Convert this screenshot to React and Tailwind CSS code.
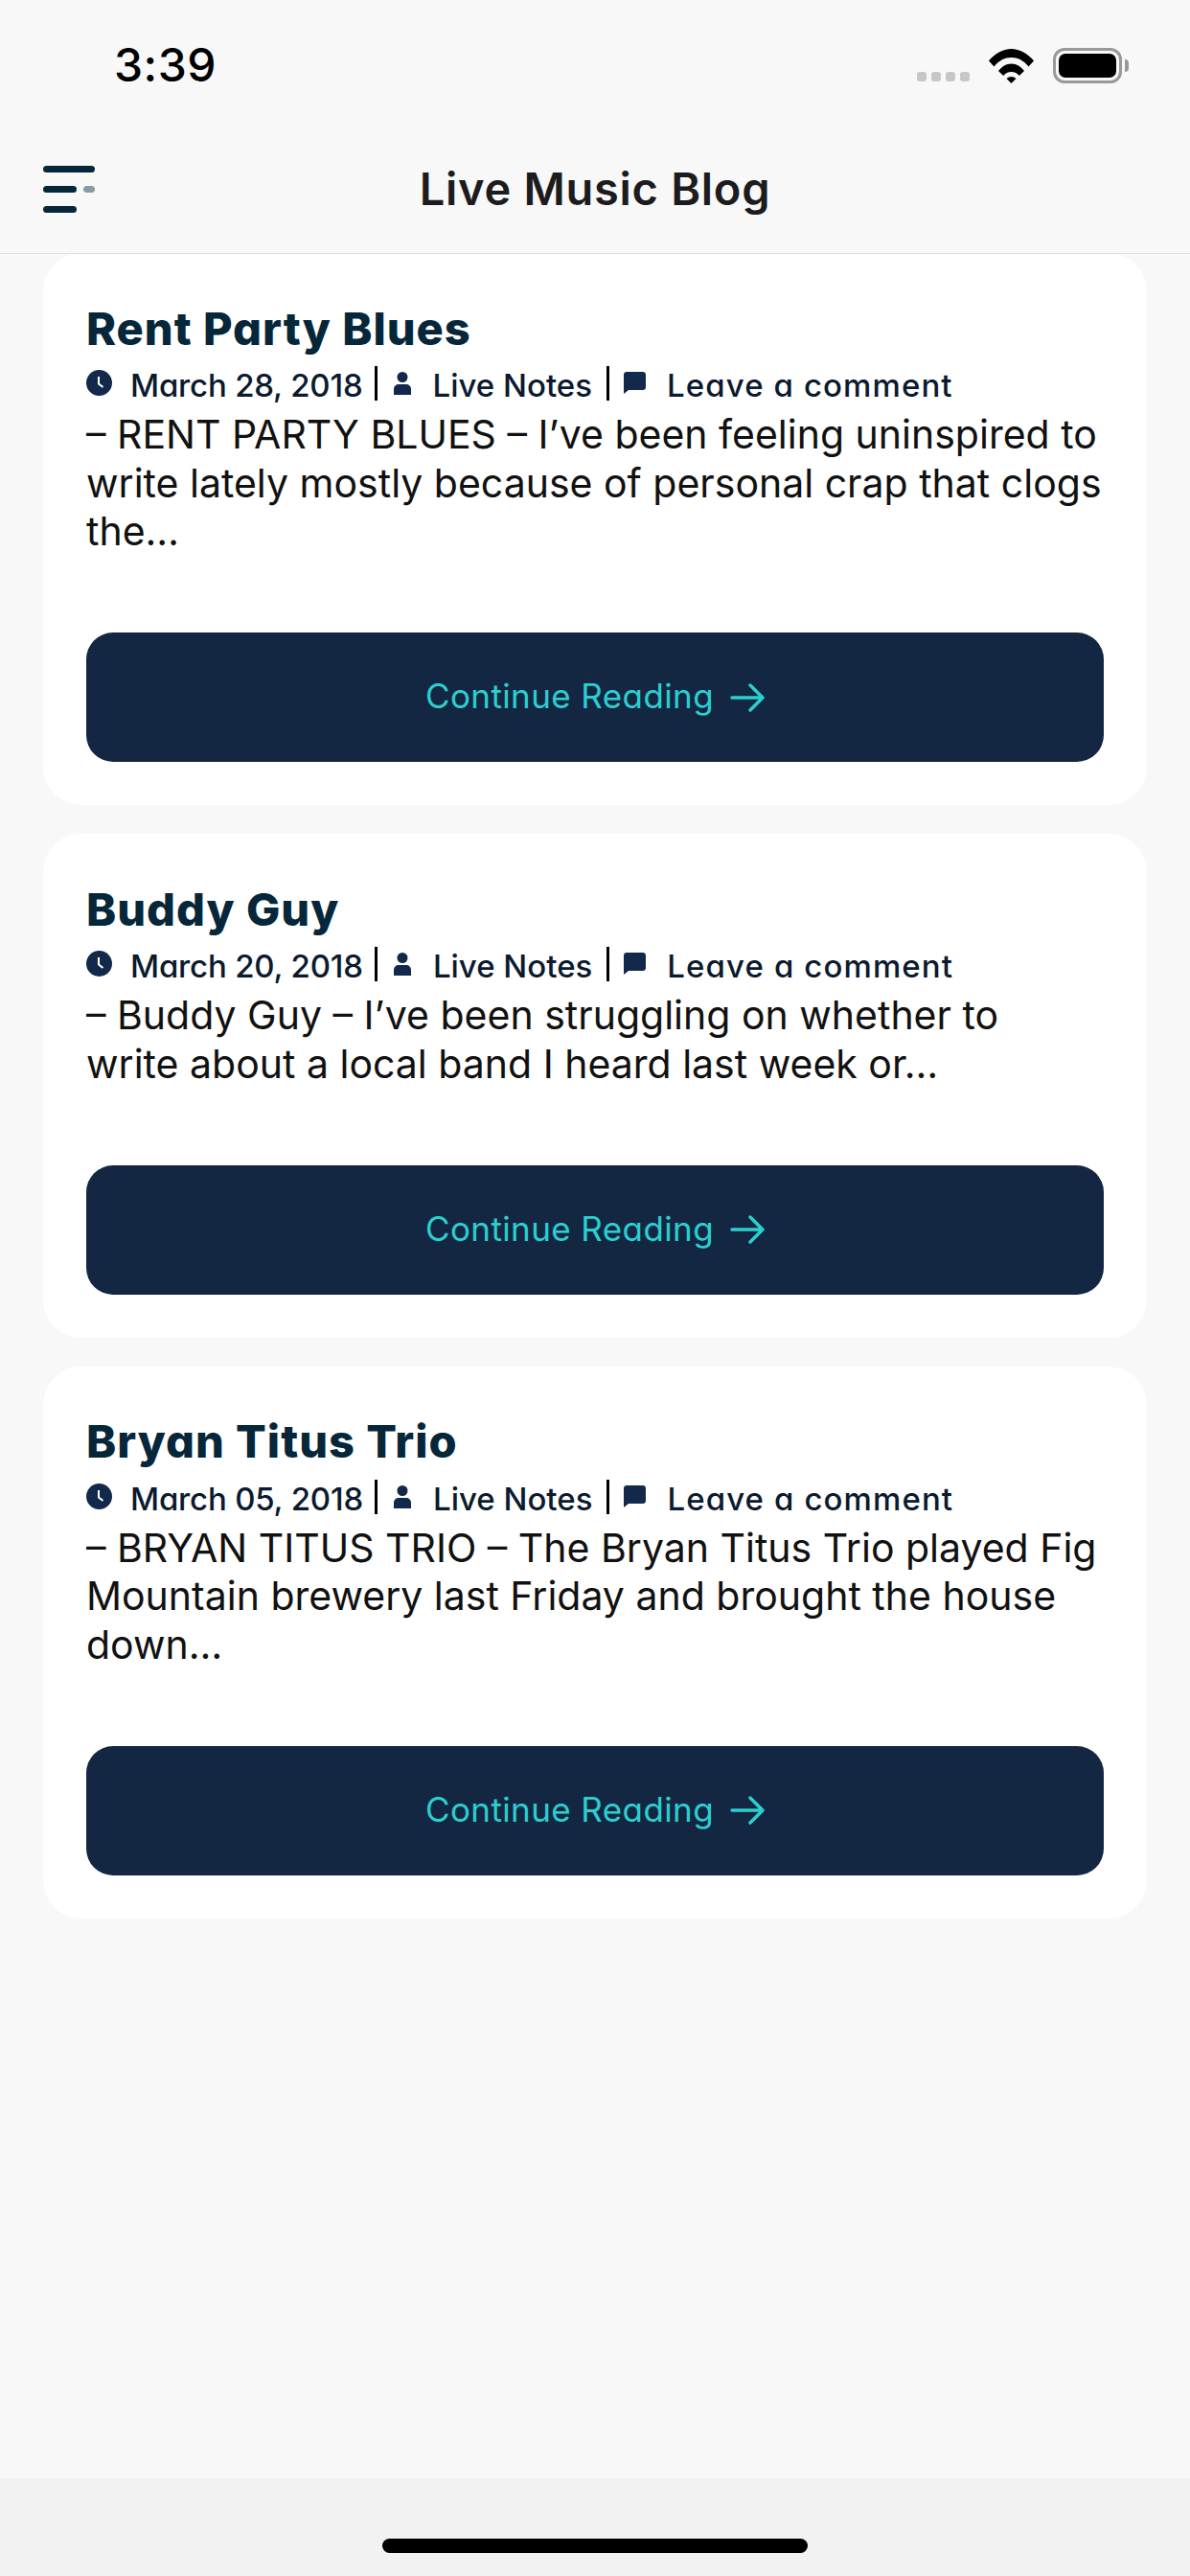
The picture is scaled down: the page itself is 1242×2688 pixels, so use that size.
import React from "react";

const posts = [
  {
    title: "Rent Party Blues",
    date: "March 28, 2018",
    excerpt: [
      "– RENT PARTY BLUES – I’ve been feeling uninspired to",
      "write lately mostly because of personal crap that clogs",
      "the…",
    ],
  },
  {
    title: "Buddy Guy",
    date: "March 20, 2018",
    excerpt: [
      "– Buddy Guy – I’ve been struggling on whether to",
      "write about a local band I heard last week or…",
    ],
  },
  {
    title: "Bryan Titus Trio",
    date: "March 05, 2018",
    excerpt: [
      "– BRYAN TITUS TRIO – The Bryan Titus Trio played Fig",
      "Mountain brewery last Friday and brought the house",
      "down…",
    ],
  },
];

const ClockIcon = () => (
  <svg viewBox="0 0 27 27" className="w-[27px] h-[27px] shrink-0 mb-[6px]">
    <circle cx="13.5" cy="13.5" r="13.5" fill="#13294b" />
    <path d="M13 7v7.500l4.500 3.500" fill="none" stroke="#fff" strokeWidth="2" />
  </svg>
);

const PersonIcon = () => (
  <svg viewBox="0 0 18 24" className="w-[18px] h-[24px] shrink-0 mb-[5px]">
    <circle cx="9" cy="5.5" r="5.5" fill="#13294b" />
    <path d="M0 24v-6c0-3 2.500-5 5-5h8c2.500 0 5 2 5 5v6z" fill="#13294b" />
  </svg>
);

const CommentIcon = () => (
  <svg viewBox="0 0 23 23" className="w-[23px] h-[23px] shrink-0 ml-[15px] mb-[6px]">
    <path d="M3 0h17c1.700 0 3 1.300 3 3v13c0 1.700-1.300 3-3 3H5l-5 4V3c0-1.700 1.300-3 3-3z" fill="#13294b" />
  </svg>
);

const Divider = () => <span className="w-[3px] h-[36px] bg-black shrink-0 mb-[5px]" />;

const ArrowIcon = () => (
  <svg viewBox="0 0 36 30" className="w-[36px] h-[30px]" fill="none" stroke="currentColor" strokeWidth="3.5" strokeLinecap="round" strokeLinejoin="round">
    <path d="M2 15h32M21 2l13 13-13 13" />
  </svg>
);

const WifiIcon = () => (
  <svg viewBox="0 0 47 36" className="w-[47px] h-[36px]" fill="#000">
    <path d="M0 12.500C6 5 15 0 23.500 0S41 5 47 12.500L41.500 18.500C36.500 12 30 9 23.500 9S10.500 12 5.500 18.500Z" />
    <path d="M10 23C13.500 18.500 18 15.500 23.500 15.500S33.500 18.500 37 23L31.800 28C29.500 25.500 27 24 23.500 24S17.500 25.500 15.200 28Z" />
    <path d="M18.500 31C20 29.700 21.700 29 23.500 29S27 29.700 28.500 31L23.500 36Z" />
  </svg>
);

const StatusBar = () => (
  <div className="h-[48px] pl-[119px] pr-[64px] flex items-center justify-between">
    <span className="text-[48px] leading-none font-medium text-black font-['Inter',sans-serif] tracking-[0.5px]">
      3:39
    </span>
    <div className="flex items-end">
      <div className="flex gap-[5px] mr-[20px] mb-[2px]">
        <span className="w-[10px] h-[10px] rounded-[3px] bg-[#c7c7c7]" />
        <span className="w-[10px] h-[10px] rounded-[3px] bg-[#c7c7c7]" />
        <span className="w-[10px] h-[10px] rounded-[3px] bg-[#c7c7c7]" />
        <span className="w-[10px] h-[10px] rounded-[3px] bg-[#c7c7c7]" />
      </div>
      <WifiIcon />
      <div className="ml-[20px] w-[72px] h-[37px] rounded-[12px] border-[3px] border-[#999999] p-[3px]">
        <div className="w-full h-full rounded-[7px] bg-black" />
      </div>
      <span className="ml-[3px] mb-[12px] w-[4px] h-[13px] rounded-r-full bg-[#999999]" />
    </div>
  </div>
);

const NavBar = () => (
  <div className="mt-[72px] h-[66px] grid grid-cols-[1fr_auto_1fr] items-center">
    <div className="ml-[45px] flex flex-col gap-[14px] w-[54px]">
      <span className="h-[7px] w-[54px] rounded-full bg-[#06263a]" />
      <div className="flex gap-[7px]">
        <span className="h-[7px] w-[35px] rounded-full bg-[#06263a]" />
        <span className="h-[7px] w-[12px] rounded-full bg-[#8a9aa5]" />
      </div>
      <span className="h-[7px] w-[35px] rounded-full bg-[#06263a]" />
    </div>
    <h1 className="mb-[2px] text-[47px] leading-none font-semibold text-[#1c1c1e] font-['Inter',sans-serif] [font-feature-settings:'cv11'] tracking-[0.7px]">
      Live Music Blog
    </h1>
    <div />
  </div>
);

const PostCard = ({ post }) => (
  <article className="bg-white rounded-[40px] px-[45px] pt-[45px] pb-[45px]">
    <h2 className="h-[66px] mb-[3px] flex items-center text-[47px] leading-none font-extrabold text-[#06263a] font-['Inter',sans-serif] [font-feature-settings:'cv11'] tracking-[1px]">
      {post.title}
    </h2>
    <div className="h-[49px] mb-[1px] flex items-center text-[33px] leading-none font-medium text-[#0b1a2e] font-['Inter',sans-serif] [font-feature-settings:'cv11']">
      <ClockIcon />
      <span className="ml-[19px] mr-[12px] tracking-[-0.2px]">{post.date}</span>
      <Divider />
      <span className="ml-[17px] flex"><PersonIcon /></span>
      <span className="ml-[23px] mr-[15px]">Live Notes</span>
      <Divider />
      <CommentIcon />
      <span className="ml-[22px] tracking-[1.1px]">Leave a comment</span>
    </div>
    <p className="text-[41px] leading-[50.5px] text-[#111111] font-['Inter',sans-serif] whitespace-nowrap">
      {post.excerpt.map((line) => (
        <span key={line} className="block">{line}</span>
      ))}
    </p>
    <button className="mt-[80.5px] w-full h-[135px] rounded-[28px] bg-[#132743] flex items-center justify-center gap-[17px] text-[35px] tracking-[0.4px] text-[#2ccfcf] font-['Inter',sans-serif] [font-feature-settings:'cv11']">
      <span className="mb-[2px]">Continue Reading</span>
      <ArrowIcon />
    </button>
  </article>
);

const App = () => {
  return (
    <div className="w-[1242px] h-[2688px] flex flex-col bg-[#f8f8f8]">
      <header className="relative z-10 h-[265px] pt-[44px] bg-[#f8f8f8] border-b border-[#dedede]">
        <StatusBar />
        <NavBar />
      </header>
      <main className="flex-1 -mt-[1px] px-[45px] flex flex-col gap-[30px]">
        {posts.map((post) => (
          <PostCard key={post.title} post={post} />
        ))}
      </main>
      <footer className="h-[102px] bg-[#f2f2f2] pt-[63px] flex justify-center">
        <span className="w-[444px] h-[15px] rounded-full bg-black" />
      </footer>
    </div>
  );
};

export default App;
